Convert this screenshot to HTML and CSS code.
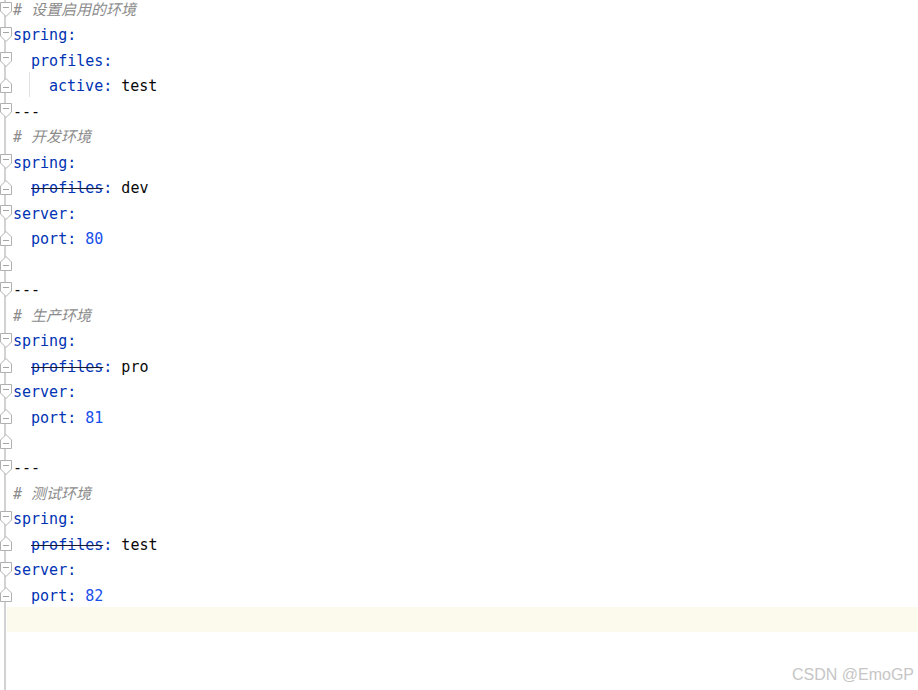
FILE: index.html
```html
<!DOCTYPE html>
<html lang="en">
  <head>
    <meta charset="UTF-8" />
    <meta name="viewport" content="width=device-width, initial-scale=1.0" />
    <title>application.yml</title>
    <link rel="stylesheet" href="styles.css">
  </head>
  <body>
    <div class="editor">
      <div class="line"><div class="gutter fold-start"></div><div class="code"><span class="comment"># 设置启用的环境</span></div></div>
      <div class="line"><div class="gutter fold-start"></div><div class="code"><span class="key">spring</span><span class="key">:</span></div></div>
      <div class="line"><div class="gutter fold-start"></div><div class="code">  <span class="key">profiles</span><span class="key">:</span></div></div>
      <div class="line"><div class="gutter fold-end"></div><div class="code"><span class="guide"></span><span class="key">active</span><span class="key">:</span> test</div></div>
      <div class="line"><div class="gutter fold-start"></div><div class="code">---</div></div>
      <div class="line"><div class="gutter"></div><div class="code"><span class="comment"># 开发环境</span></div></div>
      <div class="line"><div class="gutter fold-start"></div><div class="code"><span class="key">spring</span><span class="key">:</span></div></div>
      <div class="line"><div class="gutter fold-end"></div><div class="code">  <span class="key deprecated">profiles</span><span class="key">:</span> dev</div></div>
      <div class="line"><div class="gutter fold-start"></div><div class="code"><span class="key">server</span><span class="key">:</span></div></div>
      <div class="line"><div class="gutter fold-end"></div><div class="code">  <span class="key">port</span><span class="key">:</span> <span class="num">80</span></div></div>
      <div class="line"><div class="gutter fold-end"></div><div class="code"></div></div>
      <div class="line"><div class="gutter fold-start"></div><div class="code">---</div></div>
      <div class="line"><div class="gutter"></div><div class="code"><span class="comment"># 生产环境</span></div></div>
      <div class="line"><div class="gutter fold-start"></div><div class="code"><span class="key">spring</span><span class="key">:</span></div></div>
      <div class="line"><div class="gutter fold-end"></div><div class="code">  <span class="key deprecated">profiles</span><span class="key">:</span> pro</div></div>
      <div class="line"><div class="gutter fold-start"></div><div class="code"><span class="key">server</span><span class="key">:</span></div></div>
      <div class="line"><div class="gutter fold-end"></div><div class="code">  <span class="key">port</span><span class="key">:</span> <span class="num">81</span></div></div>
      <div class="line"><div class="gutter fold-end"></div><div class="code"></div></div>
      <div class="line"><div class="gutter fold-start"></div><div class="code">---</div></div>
      <div class="line"><div class="gutter"></div><div class="code"><span class="comment"># 测试环境</span></div></div>
      <div class="line"><div class="gutter fold-start"></div><div class="code"><span class="key">spring</span><span class="key">:</span></div></div>
      <div class="line"><div class="gutter fold-end"></div><div class="code">  <span class="key deprecated">profiles</span><span class="key">:</span> test</div></div>
      <div class="line"><div class="gutter fold-start"></div><div class="code"><span class="key">server</span><span class="key">:</span></div></div>
      <div class="line"><div class="gutter fold-end"></div><div class="code">  <span class="key">port</span><span class="key">:</span> <span class="num">82</span></div></div>
      <div class="line current"><div class="gutter"></div><div class="code"></div></div>
      <div class="rest"><div class="gutter"></div></div>
    </div>
    <div class="watermark">CSDN @EmoGP</div>
  </body>
</html>
```

FILE: styles.css
```css
html, body {
  margin: 0;
  padding: 0;
  background: #fff;
  overflow: hidden;
}
.editor {
  display: flex;
  flex-direction: column;
  margin-top: -4.5px;
  height: calc(100vh + 4.5px);
  font-family: "DejaVu Sans Mono", "Noto Sans CJK SC", monospace;
  font-size: 15px;
  color: #080808;
}
.line {
  display: flex;
  height: 25.48px;
  line-height: 25.48px;
  white-space: pre;
  overflow: hidden;
}
.line.current {
  background: #fcfaed;
}
.rest {
  flex: 1;
  display: flex;
}
.gutter {
  width: 13px;
  flex: none;
  background: linear-gradient(to right, #fff 0 4px, #d2d2d2 4px 6px, #fff 6px 7px, transparent 7px) no-repeat;
  background-size: 13px 100%;
}
.fold-start {
  background-image:
    url("data:image/svg+xml,%3Csvg xmlns='http://www.w3.org/2000/svg' width='12' height='15'%3E%3Cpath d='M0.5 0.5H11.5V9L6 14.5L0.5 9Z' fill='%23fff' stroke='%23b0b0b0'/%3E%3Cpath d='M3 5.5H9' stroke='%23a4a4a4'/%3E%3C/svg%3E"),
    linear-gradient(to right, #fff 0 4px, #d2d2d2 4px 6px, #fff 6px 7px, transparent 7px);
  background-repeat: no-repeat, no-repeat;
  background-position: 0 6px, 0 0;
  background-size: 12px 15px, 13px 100%;
}
.fold-end {
  background-image:
    url("data:image/svg+xml,%3Csvg xmlns='http://www.w3.org/2000/svg' width='12' height='15'%3E%3Cpath d='M6 0.5L11.5 6V14.5H0.5V6Z' fill='%23fff' stroke='%23b0b0b0'/%3E%3Cpath d='M3 9.5H9' stroke='%23a4a4a4'/%3E%3C/svg%3E"),
    linear-gradient(to right, #fff 0 4px, #d2d2d2 4px 6px, #fff 6px 7px, transparent 7px);
  background-repeat: no-repeat, no-repeat;
  background-position: 0 6px, 0 0;
  background-size: 12px 15px, 13px 100%;
}
.code {
  flex: 1;
  padding-top: 2.5px;
}
.key {
  color: #0033b3;
}
.deprecated {
  text-decoration: line-through;
  text-decoration-color: #1a1a2e;
}
.num {
  color: #1750eb;
}
.comment {
  color: #8c8c8c;
  font-style: italic;
}
.guide {
  display: inline-block;
  width: 36px;
  height: 25.48px;
  margin-top: -2.5px;
  vertical-align: top;
  background: linear-gradient(to right, transparent 16px, #e2e2e2 16px 17px, transparent 17px);
}
.watermark {
  position: absolute;
  right: 4px;
  bottom: 6px;
  font-family: "Liberation Sans", Arial, sans-serif;
  font-size: 16px;
  color: #c6c6c6;
}
```
